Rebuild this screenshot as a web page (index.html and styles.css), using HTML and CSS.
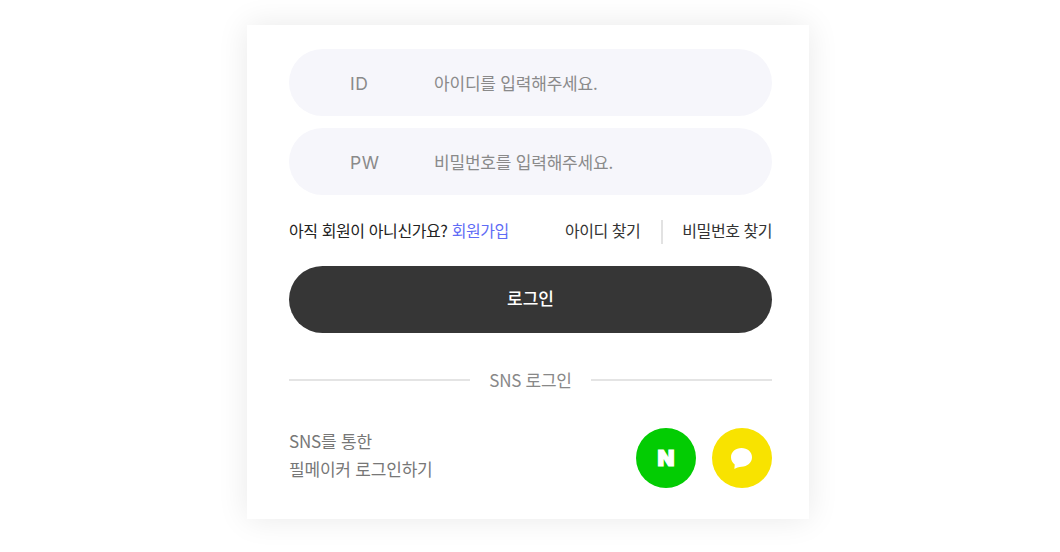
FILE: index.html
```html
<!DOCTYPE html>
<html lang="ko">
<head>
<meta charset="utf-8">
<title>로그인</title>
<link rel="stylesheet" href="styles.css">
</head>
<body>
<main class="card">
  <div class="field"><span class="field-label">ID</span><span class="field-hint">아이디를 입력해주세요.</span></div>
  <div class="field"><span class="field-label">PW</span><span class="field-hint">비밀번호를 입력해주세요.</span></div>
  <div class="links">
    <p class="join">아직 회원이 아니신가요? <a class="join-link">회원가입</a></p>
    <div class="find">
      <a class="find-link">아이디 찾기</a>
      <span class="find-sep"></span>
      <a class="find-link">비밀번호 찾기</a>
    </div>
  </div>
  <button class="login">로그인</button>
  <div class="sns-title"><span class="rule"></span><span class="sns-text">SNS 로그인</span><span class="rule"></span></div>
  <div class="sns-row">
    <p class="sns-desc">SNS를 통한<br>필메이커 로그인하기</p>
    <div class="sns-btns">
      <a class="sns-btn naver">N</a>
      <a class="sns-btn kakao">
        <svg class="kakao-icon" viewBox="0 0 21 21" width="21" height="21"><path fill="#fff" d="M10.500 0C16.300 0 21 3.900 21 9.300C21 14.700 16.300 18.700 10.500 18.700C9.300 18.700 8 18.900 6.500 19.500C5.200 20 4.200 20.500 3.400 21L3.700 16.500C1.400 14.800 0 12.300 0 9.300C0 3.900 4.700 0 10.500 0Z"/></svg>
      </a>
    </div>
  </div>
</main>
</body>
</html>
```
FILE: styles.css
```css
* { box-sizing: border-box; }
html, body { margin: 0; padding: 0; }
body {
  background: #fff;
  height: 552px;
  overflow: hidden;
  display: flex;
  justify-content: center;
  align-items: flex-start;
  padding-top: 25px;
  font-family: "Noto Sans CJK KR", "Noto Sans", sans-serif;
}
.card {
  width: 562px;
  height: 494px;
  margin-left: -4px;
  padding: 24px 37px 0 42px;
  background: #fff;
  box-shadow: 0 0 30px rgba(0, 0, 0, 0.09);
}
.field {
  height: 67px;
  border-radius: 34px;
  background: #f6f6fb;
  display: flex;
  align-items: center;
  margin-bottom: 12px;
  padding-left: 61px;
  color: #8a8a8a;
  font-size: 17px;
}
.field-label {
  width: 84px;
  padding-top: 2px;
  font-family: "Inter", sans-serif;
  font-size: 17.500px;
  letter-spacing: 0.6px;
}
.field-hint { letter-spacing: -0.2px; padding-bottom: 1px; }
.links {
  display: flex;
  justify-content: space-between;
  align-items: center;
  height: 24px;
  margin-top: 25px;
  font-size: 16px;
  color: #333;
}
.join { margin: 0; padding-bottom: 4px; color: #222; letter-spacing: -0.4px; }
.join-link { color: #5f6cf5; }
.find { display: flex; align-items: center; height: 24px; }
.find-link { color: #333; letter-spacing: -0.45px; padding-bottom: 4px; }
.find-sep { width: 2px; height: 24px; background: #e2e2e2; margin: 0 19px 0 21px; }
.login {
  display: block;
  width: 100%;
  height: 67px;
  margin-top: 22px;
  padding: 0 0 4px;
  border: 0;
  border-radius: 34px;
  background: #363636;
  color: #fff;
  font-family: inherit;
  font-size: 17px;
  font-weight: 500;
}
.sns-title {
  display: flex;
  align-items: center;
  margin-top: 35px;
  height: 24px;
  color: #888;
  font-size: 17px;
}
.rule { flex: 1; height: 2px; background: #e4e4e4; }
.sns-text { padding: 0 19px 2px; letter-spacing: -0.25px; }
.sns-row {
  display: flex;
  justify-content: space-between;
  align-items: flex-start;
  margin-top: 36px;
  height: 60px;
}
.sns-desc {
  margin: -1px 0 0;
  color: #777;
  font-size: 17px;
  line-height: 28px;
  letter-spacing: -0.2px;
}
.sns-btns { display: flex; gap: 16px; }
.sns-btn {
  width: 60px;
  height: 60px;
  border-radius: 50%;
  display: flex;
  align-items: center;
  justify-content: center;
}
.naver {
  background: #03cc03;
  color: #fff;
  font-family: "Inter", sans-serif;
  font-weight: 900;
  font-size: 22px;
  -webkit-text-stroke: 1.2px #fff;
}
.kakao { background: #f8e300; }
.kakao-icon { display: block; margin-top: 1px; margin-right: 1px; }
```
